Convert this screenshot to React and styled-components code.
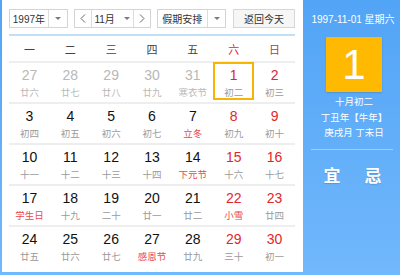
import React from "react"
import styled, { createGlobalStyle, css } from "styled-components"

const GlobalStyle = createGlobalStyle`
  html, body {
    margin: 0;
    padding: 0;
    background: #fff;
  }
  body {
    font-family: "Liberation Sans", "Noto Sans CJK SC", sans-serif;
  }
`

const RED = "#e3262b"
const FEST = "#e84a4a"

const Frame = styled.div`
  width: 400px;
  height: 275px;
  display: flex;
  box-sizing: border-box;
  padding: 0 0 3px 2px;
  background: linear-gradient(#52a4f6, #71b8fc);
`

const Main = styled.div`
  width: 301px;
  flex: none;
  background: #fff;
  box-sizing: border-box;
  padding: 9px 8px 0 7px;
`

const Toolbar = styled.div`
  display: flex;
  height: 19px;
  gap: 6px;
`

const Box = styled.div`
  display: flex;
  box-sizing: border-box;
  height: 19px;
  width: ${p => p.w}px;
  border: 1px solid #d4d4d4;
  background: #fff;
  font-size: 10px;
  color: #333;
`

const BoxText = styled.div`
  flex: 1;
  display: flex;
  align-items: center;
  justify-content: center;
`

const Drop = styled.div`
  width: ${p => p.w || 17}px;
  border-left: 1px solid #dcdcdc;
  display: flex;
  align-items: center;
  justify-content: center;
  ${p =>
    p.left &&
    css`
      border-left: none;
      border-right: 1px solid #dcdcdc;
    `}
`

const Caret = styled.span`
  width: 0;
  height: 0;
  margin-left: ${p => p.gap || 0}px;
  border-left: 3px solid transparent;
  border-right: 3px solid transparent;
  border-top: 3px solid #7a7a7a;
`

const TodayBtn = styled.div`
  margin-left: 1px;
  width: 62px;
  height: 19px;
  box-sizing: border-box;
  border: 1px solid #d6d6d6;
  background: #f6f6f6;
  font-size: 10px;
  color: #333;
  display: flex;
  align-items: center;
  justify-content: center;
`

const BlueLine = styled.div`
  height: 2px;
  margin-top: 6px;
  background: #c2dff8;
`

const WeekHead = styled.div`
  display: grid;
  grid-template-columns: repeat(7, 1fr);
  height: 25px;
  align-items: center;
  font-size: 11px;
  padding-top: 1px;
  box-sizing: border-box;
`

const WeekName = styled.div`
  text-align: center;
  color: ${p => (p.red ? RED : "#444")};
`

const Row = styled.div`
  display: grid;
  grid-template-columns: repeat(7, 1fr);
  border-top: 2px solid #eeeeee;
  height: 41px;
  box-sizing: border-box;
`

const Cell = styled.div`
  display: flex;
  flex-direction: column;
  align-items: center;
  border: 2px solid ${p => (p.selected ? "#f7b500" : "transparent")};
  height: 38px;
  box-sizing: border-box;
  margin: -1px 0 0;
  padding-top: 3px;
`

const Num = styled.div`
  font-size: 14px;
  line-height: 17px;
  color: ${p => (p.dim ? "#b8b8b8" : p.red ? RED : "#111")};
`

const Lunar = styled.div`
  font-size: 9.5px;
  line-height: 13px;
  margin-top: 2px;
  color: ${p => (p.dim ? "#b8b8b8" : p.fest ? FEST : "#9a9a9a")};
`

const Side = styled.div`
  flex: 1;
  display: flex;
  flex-direction: column;
  align-items: center;
  color: #fff;
`

const DateLine = styled.div`
  font-size: 10px;
  margin-top: 14px;
  line-height: 12px;
  margin-left: 3px;
`

const DayBox = styled.div`
  margin-top: 11px;
  margin-left: 5px;
  width: 56px;
  height: 55px;
  background: #ffb900;
  border-radius: 1px;
  box-shadow: 0 1px 2px rgba(0, 0, 0, 0.15);
  display: flex;
  align-items: center;
  justify-content: center;
  font-size: 42px;
  line-height: 1;
`

const Info = styled.div`
  margin-top: 2px;
  margin-left: 5px;
  font-size: 9.5px;
  line-height: 15.5px;
  text-align: center;
`

const Rule = styled.div`
  align-self: stretch;
  margin: 8px 7px 0 8px;
  height: 1px;
  background: rgba(255, 255, 255, 0.4);
`

const Advice = styled.div`
  display: flex;
  gap: 24px;
  margin-top: 12px;
  margin-left: 2px;
  font-size: 17px;
  font-weight: bold;
  text-shadow: 0 1px 1px rgba(0, 0, 0, 0.15);
`

const Chevron = ({ dir }) => (
  <svg width="6" height="9" viewBox="0 0 6 9">
    <polyline
      points={dir === "left" ? "5,0.5 1,4.5 5,8.5" : "1,0.5 5,4.5 1,8.5"}
      fill="none"
      stroke="#666"
      strokeWidth="1"
    />
  </svg>
)

const weeks = ["一", "二", "三", "四", "五", "六", "日"]

const days = [
  [
    [27, "廿六", 1], [28, "廿七", 1], [29, "廿八", 1], [30, "廿九", 1], [31, "寒衣节", 1], [1, "初二", 0, 0, 1], [2, "初三"],
  ],
  [[3, "初四"], [4, "初五"], [5, "初六"], [6, "初七"], [7, "立冬", 0, 1], [8, "初九"], [9, "初十"]],
  [[10, "十一"], [11, "十二"], [12, "十三"], [13, "十四"], [14, "下元节", 0, 1], [15, "十六"], [16, "十七"]],
  [[17, "学生日", 0, 1], [18, "十九"], [19, "二十"], [20, "廿一"], [21, "廿二"], [22, "小雪", 0, 1], [23, "廿四"]],
  [[24, "廿五"], [25, "廿六"], [26, "廿七"], [27, "感恩节", 0, 1], [28, "廿九"], [29, "三十"], [30, "初一"]],
]

export default function App() {
  return (
    <>
      <GlobalStyle />
      <Frame>
        <Main>
          <Toolbar>
            <Box w={59}>
              <BoxText>1997年</BoxText>
              <Drop w={18}>
                <Caret />
              </Drop>
            </Box>
            <Box w={77}>
              <Drop left w={16}>
                <Chevron dir="left" />
              </Drop>
              <BoxText>
                11月
                <Caret gap={9} />
              </BoxText>
              <Drop w={16}>
                <Chevron dir="right" />
              </Drop>
            </Box>
            <Box w={70}>
              <BoxText>假期安排</BoxText>
              <Drop>
                <Caret />
              </Drop>
            </Box>
            <TodayBtn>返回今天</TodayBtn>
          </Toolbar>
          <BlueLine />
          <WeekHead>
            {weeks.map((w, i) => (
              <WeekName key={w} red={i > 4}>
                {w}
              </WeekName>
            ))}
          </WeekHead>
          {days.map((row, r) => (
            <Row key={r}>
              {row.map(([n, l, dim, fest, sel], i) => (
                <Cell key={i} selected={sel}>
                  <Num dim={dim} red={i > 4}>
                    {n}
                  </Num>
                  <Lunar dim={dim} fest={fest}>
                    {l}
                  </Lunar>
                </Cell>
              ))}
            </Row>
          ))}
        </Main>
        <Side>
          <DateLine>1997-11-01 星期六</DateLine>
          <DayBox>1</DayBox>
          <Info>
            十月初二
            <br />
            丁丑年【牛年】
            <br />
            庚戌月 丁未日
          </Info>
          <Rule />
          <Advice>
            <span>宜</span>
            <span>忌</span>
          </Advice>
        </Side>
      </Frame>
    </>
  )
}
